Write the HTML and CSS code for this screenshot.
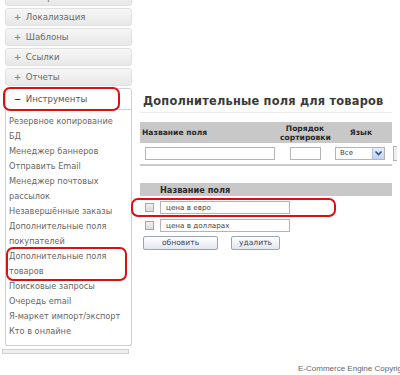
FILE: index.html
```html
<!DOCTYPE html>
<html lang="ru">
<head>
    <meta charset="UTF-8">
    <title>Дополнительные поля для товаров</title>
    <link rel="stylesheet" href="styles.css">
</head>
<body>
    <div class="page">

        <!-- Left menu -->
        <div class="sidebar">
            <div class="menu-head"><span class="sign">+</span> Настройки</div>
            <div class="menu-head"><span class="sign">+</span> Локализация</div>
            <div class="menu-head"><span class="sign">+</span> Шаблоны</div>
            <div class="menu-head"><span class="sign">+</span> Ссылки</div>
            <div class="menu-head"><span class="sign">+</span> Отчеты</div>
            <div class="menu-head active marked"><span class="sign minus">−</span> Инструменты</div>
            <ul class="menu-list">
                <li>Резервное копирование БД</li>
                <li>Менеджер баннеров</li>
                <li>Отправить Email</li>
                <li>Менеджер почтовых рассылок</li>
                <li>Незавершённые заказы</li>
                <li>Дополнительные поля покупателей</li>
                <li class="marked">Дополнительные поля товаров</li>
                <li>Поисковые запросы</li>
                <li>Очередь email</li>
                <li class="nowrap">Я-маркет импорт/экспорт</li>
                <li>Кто в онлайне</li>
            </ul>
            <div class="menu-bottom"></div>
        </div>

        <!-- Content -->
        <div class="content">
            <h1>Дополнительные поля для товаров</h1>

            <div class="add-table">
                <div class="add-head">
                    <div class="col-name">Название поля</div>
                    <div class="col-order">Порядок<br>сортировки</div>
                    <div class="col-lang">Язык</div>
                </div>
                <div class="add-row">
                    <div class="col-name"><span class="field wide"></span></div>
                    <div class="col-order"><span class="field short"></span></div>
                    <div class="col-lang">
                        <span class="select">Все
                            <span class="select-arrow">
                                <svg width="9" height="8" viewBox="0 0 9 8"><path d="M1.5 2.5 L4.5 5.5 L7.5 2.5" fill="none" stroke="#2a4f9c" stroke-width="1.6"/></svg>
                            </span>
                        </span>
                    </div>
                    <span class="cut-edge"></span>
                </div>
            </div>

            <div class="list-table">
                <div class="list-head">Название поля</div>
                <div class="list-row marked">
                    <span class="check"></span>
                    <span class="field wide">цена в евро</span>
                </div>
                <div class="list-row">
                    <span class="check"></span>
                    <span class="field wide">цена в долларах</span>
                </div>
                <div class="buttons">
                    <span class="btn btn-update">обновить</span>
                    <span class="btn btn-delete">удалить</span>
                </div>
            </div>
        </div>
    </div>

    <div class="footer">E-Commerce Engine Copyright</div>
</body>
</html>
```

FILE: styles.css
```css
/* Global */
body {
    margin: 0;
    background: #ffffff;
    font-family: "DejaVu Sans", Verdana, sans-serif;
    color: #555;
    overflow: hidden;
    width: 400px;
    height: 375px;
}

.page {
    display: flex;
    align-items: flex-start;
}

/* Sidebar menu */
.sidebar {
    width: 127px;
    margin-left: 5px;
    margin-top: -12px;
    display: flex;
    flex-direction: column;
}

.menu-head {
    position: relative;
    height: 16px;
    line-height: 16px;
    margin-bottom: 2px;
    padding-left: 8px;
    border: 1px solid #e0e0e0;
    border-radius: 3px;
    background: linear-gradient(#f6f6f6, #e8e8e8);
    font-size: 8.6px;
    color: #6a6a6a;
}

.sign {
    display: inline-block;
    width: 9px;
    font-weight: bold;
    color: #888;
}

.sign.minus {
    color: #333;
}

.menu-head.active {
    height: 20px;
    line-height: 20px;
    margin-bottom: 0;
    background: #ffffff;
    border-color: #cfcfcf;
    border-radius: 3px 3px 0 0;
    color: #555;
}

.menu-list {
    list-style: none;
    margin: 0;
    padding: 4px 6px 6px 3px;
    border: 1px solid #cfcfcf;
    border-top: none;
    border-radius: 0 0 3px 3px;
    font-size: 8.2px;
    line-height: 15px;
    color: #666;
}

.menu-list li {
    position: relative;
}

.menu-list li.nowrap {
    white-space: nowrap;
}

.menu-bottom {
    height: 3px;
    margin: 3px 3px 0 -3px;
    border: 1px solid #cfcfcf;
    background: #efefef;
}

/* Red annotation frames */
.marked {
    position: relative;
}

.marked::after {
    content: "";
    position: absolute;
    border: 2px solid #dd1010;
    border-radius: 7px;
    pointer-events: none;
}

.menu-head.marked::after {
    left: -3px;
    right: 11px;
    top: -2px;
    bottom: -2px;
}

.menu-list li.marked::after {
    left: -3px;
    right: -2px;
    top: -2px;
    bottom: -2px;
}

.list-row.marked::after {
    left: -9px;
    right: 56px;
    top: -3px;
    bottom: -3px;
}

/* Content */
.content {
    margin-left: 8px;
    width: 252px;
    padding-top: 93px;
}

h1 {
    margin: 0;
    padding: 0 0 3px 3px;
    font-size: 11.4px;
    line-height: 16px;
    letter-spacing: 0.2px;
    white-space: nowrap;
    color: #3a3a3a;
    border-bottom: 1px solid #ececec;
}

/* Add field table */
.add-table {
    margin-top: 9px;
    border-bottom: 2px solid #cbcbcb;
    padding-bottom: 4px;
}

.add-head,
.add-row {
    display: grid;
    grid-template-columns: 140px 50px 62px;
    align-items: center;
}

.add-head {
    height: 21px;
    background: #c8c8c8;
    font-size: 7.6px;
    font-weight: bold;
    color: #2a2a2a;
    line-height: 9px;
}

.add-head .col-name {
    padding-left: 2px;
}

.add-head .col-order,
.add-head .col-lang {
    text-align: center;
}

.add-row {
    position: relative;
    margin-top: 3px;
    height: 14px;
}

.add-row .col-name {
    padding-left: 5px;
}

.add-row .col-order {
    padding-left: 10px;
}

.add-row .col-lang {
    padding-left: 5px;
}

.field {
    display: block;
    box-sizing: border-box;
    height: 13px;
    border: 1px solid #b4b4b4;
    background: #fff;
    font-size: 7.2px;
    line-height: 11px;
    padding-left: 5px;
    color: #444;
}

.field.wide {
    width: 130px;
}

.field.short {
    width: 31px;
}

.select {
    display: flex;
    align-items: center;
    justify-content: space-between;
    box-sizing: border-box;
    width: 50px;
    height: 13px;
    border: 1px solid #b4b4b4;
    padding-left: 4px;
    font-size: 7px;
    color: #444;
}

.select-arrow {
    display: flex;
    align-items: center;
    justify-content: center;
    width: 11px;
    height: 11px;
    background: linear-gradient(#e6eefc, #c3d3f2);
    border-left: 1px solid #b0c0e0;
}

.cut-edge {
    position: absolute;
    right: -5px;
    top: 0;
    width: 3px;
    height: 13px;
    border: 1px solid #b4b4b4;
    border-right: none;
    background: #eee;
}

/* Existing fields list */
.list-table {
    margin-top: 17px;
}

.list-head {
    height: 13px;
    line-height: 14px;
    padding-left: 20px;
    background: #c8c8c8;
    font-size: 8.2px;
    font-weight: bold;
    color: #2a2a2a;
}

.list-row {
    display: flex;
    align-items: center;
    gap: 6px;
    margin-top: 5px;
    padding-left: 5px;
}

.check {
    box-sizing: border-box;
    width: 9px;
    height: 9px;
    border: 1px solid #a8a8a8;
    background: linear-gradient(#f0f0f0, #dcdcdc);
}

.buttons {
    display: flex;
    gap: 13px;
    margin-top: 4px;
    padding-left: 3px;
}

.btn {
    box-sizing: border-box;
    height: 14px;
    line-height: 12px;
    border: 1px solid #9aa6b8;
    border-radius: 2px;
    background: linear-gradient(#ffffff, #e2e6ee);
    font-size: 7.6px;
    color: #3c4660;
    text-align: center;
}

.btn-update {
    width: 75px;
}

.btn-delete {
    width: 49px;
}

/* Footer */
.footer {
    margin-top: 10px;
    padding-left: 298px;
    white-space: nowrap;
    font-family: "Liberation Sans", Arial, sans-serif;
    font-size: 8px;
    line-height: 10px;
    color: #666;
}
```
